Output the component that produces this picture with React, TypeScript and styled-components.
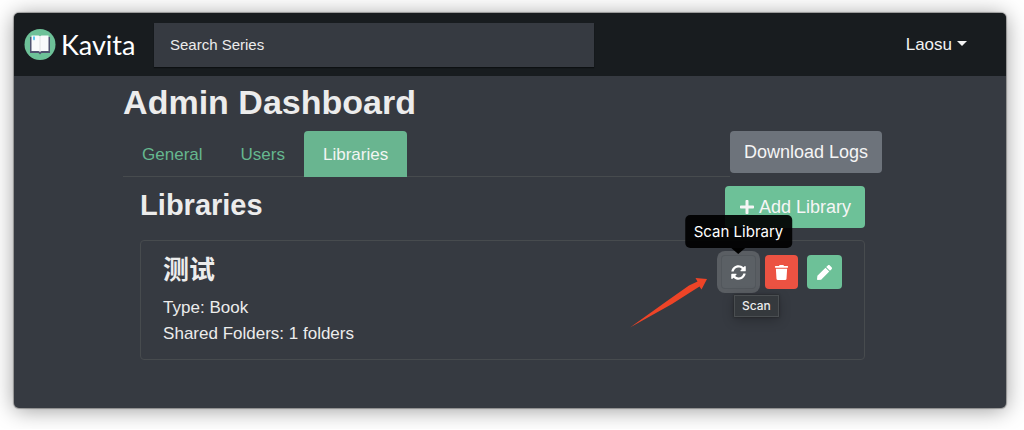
import React from 'react';
import styled, { createGlobalStyle, css } from 'styled-components';
import { FaPen, FaPlus, FaSyncAlt, FaTrash } from 'react-icons/fa';

const GlobalStyle = createGlobalStyle`
  *, *::before, *::after { box-sizing: border-box; }
  body {
    margin: 0;
    background: #fff;
    color: #ececec;
    font: 17px/26px "Liberation Sans", "Noto Sans CJK SC", sans-serif;
  }
  button, input { font-family: inherit; }
  h1, h2, h3, p, ul { margin: 0; padding: 0; }
`;

const Window = styled.div`
  margin: 13px 18px 21px 14px;
  background: #363a41;
  border-radius: 5px;
  overflow: hidden;
  box-shadow: 0 0 1px 1px rgba(0, 0, 0, 0.3), 0 2px 22px rgba(0, 0, 0, 0.4);
`;

const Header = styled.header`
  display: flex;
  align-items: center;
  height: 63px;
  padding: 0 39px 0 10px;
  background: #181c1f;
`;

const Brand = styled.a`
  display: flex;
  align-items: center;
  gap: 5px;
  width: 130px;
  height: 34px;
  flex: none;
  color: #fff;
  font: 27px/30px Lato, sans-serif;
  text-decoration: none;
`;

const Search = styled.input`
  flex: 0 1 440px;
  min-width: 0;
  height: 44px;
  padding: 0 16px;
  border: 0;
  border-radius: 0;
  background: #363a41;
  box-shadow: 0 1px 1px #0d1012;
  color: #ececec;
  font-size: 15px;
  &::placeholder { color: #ececec; opacity: 1; }
`;

const UserMenu = styled.button`
  display: flex;
  align-items: center;
  gap: 5px;
  margin-left: auto;
  padding: 0;
  border: 0;
  background: none;
  color: #f2f2f2;
  font-size: 17px;
  line-height: 26px;
  &::after {
    content: '';
    margin-bottom: 3px;
    border: 5px solid transparent;
    border-top-color: currentColor;
    border-bottom: 0;
  }
`;

const Main = styled.main`
  padding: 8px 12.5% 48px 11%;
`;

const PageTitle = styled.h1`
  margin-bottom: 11px;
  font-size: 34px;
  line-height: 36px;
`;

const TabRow = styled.div`
  display: flex;
  align-items: flex-start;
`;

const Tabs = styled.nav`
  display: flex;
  flex: 1;
  height: 46px;
  border-bottom: 1px solid #474b4e;
`;

const Tab = styled.a<{ $active?: boolean }>`
  height: 46px;
  padding: 0 19px;
  border-radius: 4px 4px 0 0;
  color: #65b78f;
  line-height: 48px;
  text-decoration: none;
  ${(p) => p.$active && css`background: #69b590; color: #f2f5f3;`}
`;

const Button = styled.button<{ $primary?: boolean }>`
  display: flex;
  align-items: center;
  gap: 4px;
  height: 42px;
  padding: 0 14px;
  border: 0;
  border-radius: 4px;
  background: ${(p) => (p.$primary ? '#6dc198' : '#6d737b')};
  color: #f5f5f5;
  font-size: 18px;
  white-space: nowrap;
`;

const Section = styled.section`
  padding: 9px 17px 0;
`;

const SectionHead = styled.div`
  display: flex;
  justify-content: space-between;
  margin-bottom: 12px;
`;

const SectionTitle = styled.h2`
  font-size: 29px;
  line-height: 38px;
`;

const List = styled.ul`
  list-style: none;
`;

const Card = styled.li`
  display: flex;
  align-items: flex-start;
  justify-content: space-between;
  padding: 14px 22px 12px;
  border: 1px solid #474b4e;
  border-radius: 4px;
`;

const LibraryName = styled.h3`
  margin-bottom: 10px;
  font-size: 26px;
  line-height: 30px;
`;

const Actions = styled.div`
  position: relative;
  display: flex;
  gap: 9px;
`;

const tones = { neutral: '#5b6065', danger: '#ec5242', primary: '#6dc198' };

const IconButton = styled.button<{ $tone: keyof typeof tones; $focused?: boolean }>`
  display: flex;
  align-items: center;
  justify-content: center;
  height: 34px;
  padding: 0 ${(p) => (p.$tone === 'danger' ? 9 : 10)}px;
  border: 0;
  border-radius: 4px;
  background: ${(p) => tones[p.$tone]};
  color: #fff;
  font-size: 15px;
  ${(p) => p.$focused && css`box-shadow: inset 0 0 0 1px #52575c, 0 0 0 4px #5a5e63;`}
`;

const ScanSlot = styled.div`
  position: relative;
`;

const Tooltip = styled.div`
  position: absolute;
  bottom: 41px;
  left: 50%;
  transform: translateX(-50%);
  padding: 5px 9px 4px;
  border-radius: 5px;
  background: rgba(0, 0, 0, 0.92);
  color: #fff;
  font: 15px/24px Inter, sans-serif;
  white-space: nowrap;
  &::after {
    content: '';
    position: absolute;
    top: 100%;
    left: 50%;
    margin-left: -7px;
    border: 7px solid transparent;
    border-top: 6px solid #000;
    border-bottom: 0;
  }
`;

const Hint = styled.div`
  position: absolute;
  top: 40px;
  left: 13px;
  padding: 0 7px;
  border: 1px solid #4a4e51;
  background: #35393d;
  box-shadow: 0 3px 12px rgba(0, 0, 0, 0.25), 0 0 2px #222;
  font: 500 12px/20px Inter, sans-serif;
`;

const Pointer = styled.svg`
  position: absolute;
  right: 134px;
  top: 22px;
`;

function Logo() {
  return (
    <svg width="32" height="32" viewBox="0 0 32 32" aria-hidden="true">
      <circle cx="16" cy="15.500" r="15.500" fill="#6dc198" />
      <path d="M6 8h20v16h-8.500l-1.500 1.500-1.500-1.500H6z" fill="#505370" />
      <path d="M7.500 6.500h7l1.500.7 1.500-.7h7V22h-7l-1.500.8-1.500-.8h-7z" fill="#f9fafb" />
      <path d="M16 7v15.500" stroke="#dadce0" strokeWidth=".8" />
      <path d="M9 7.500h2v4l-1-1-1 1z" fill="#5ac8f2" />
    </svg>
  );
}

export default function App() {
  return (
    <>
      <GlobalStyle />
      <Window>
        <Header>
          <Brand href="#"><Logo />Kavita</Brand>
          <Search type="search" aria-label="Search Series" placeholder="Search Series" />
          <UserMenu type="button" aria-haspopup="menu">Laosu</UserMenu>
        </Header>
        <Main>
          <PageTitle>Admin Dashboard</PageTitle>
          <TabRow>
            <Tabs>
              <Tab href="#general">General</Tab>
              <Tab href="#users">Users</Tab>
              <Tab href="#libraries" $active aria-current="page">Libraries</Tab>
            </Tabs>
            <Button type="button">Download Logs</Button>
          </TabRow>
          <Section>
            <SectionHead>
              <SectionTitle>Libraries</SectionTitle>
              <Button type="button" $primary><FaPlus size={16} />Add Library</Button>
            </SectionHead>
            <List>
              <Card>
                <div>
                  <LibraryName lang="zh-CN">测试</LibraryName>
                  <p>Type: Book</p>
                  <p>Shared Folders: 1 folders</p>
                </div>
                <Actions>
                  <ScanSlot>
                    <IconButton type="button" $tone="neutral" $focused aria-label="Scan Library">
                      <FaSyncAlt />
                    </IconButton>
                    <Tooltip role="tooltip">Scan Library</Tooltip>
                    <Hint>Scan</Hint>
                  </ScanSlot>
                  <IconButton type="button" $tone="danger" aria-label="Delete"><FaTrash /></IconButton>
                  <IconButton type="button" $tone="primary" aria-label="Edit"><FaPen /></IconButton>
                  <Pointer width="78" height="52" viewBox="0 0 78 52" aria-hidden="true">
                    <path d="M0 50.500 37 24 59 8.500 67.500 4.500 65.500 1 77 2 71.500 12.500 69.500 9.500 60 15.500 42 27z" fill="#ee4427" />
                  </Pointer>
                </Actions>
              </Card>
            </List>
          </Section>
        </Main>
      </Window>
    </>
  );
}
